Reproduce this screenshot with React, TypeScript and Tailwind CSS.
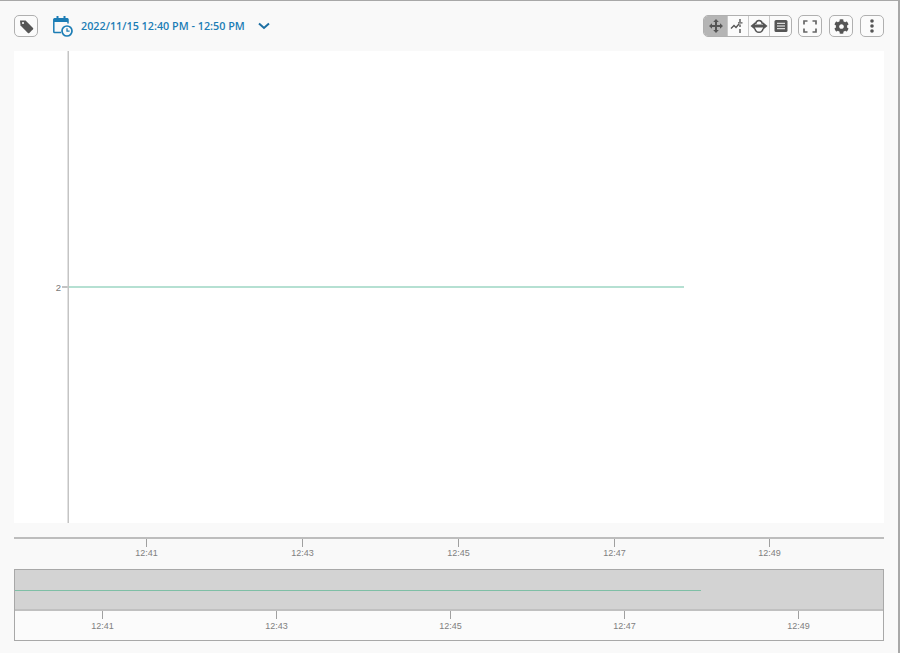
import { FaCog } from 'react-icons/fa'
import type { ReactNode } from 'react'

function IconButton({ children }: { children: ReactNode }) {
  return (
    <button className="flex h-[22px] w-[24px] items-center justify-center rounded-[5px] border border-[#b0b0b0] bg-[#fbfbfb] text-[#555]">
      {children}
    </button>
  )
}

function TagIcon() {
  return (
    <svg width="15" height="15" viewBox="0 0 15 15" fill="#555">
      <path d="M1 1.500h5.600L14 8.900a1 1 0 0 1 0 1.400l-3.700 3.700a1 1 0 0 1-1.400 0L1.500 6.600z" />
      <circle cx="4" cy="4" r="1.100" fill="#fbfbfb" />
    </svg>
  )
}

function CalendarClock() {
  return (
    <svg width="20" height="21" viewBox="0 0 20 21" fill="none">
      <path d="M8 16.500H1.600a.8.8 0 0 1-.8-.8V3.500a.8.8 0 0 1 .8-.8h12.600a.8.8 0 0 1 .8.8v4" stroke="#1c7db5" strokeWidth="1.500" />
      <rect x="1" y="2.500" width="14" height="3.500" fill="#1c7db5" />
      <rect x="3.500" y="0" width="2" height="3.500" fill="#1c7db5" />
      <rect x="10.500" y="0" width="2" height="3.500" fill="#1c7db5" />
      <circle cx="14" cy="15" r="5" fill="#f9f9f9" stroke="#1c7db5" strokeWidth="1.700" />
      <path d="M14 12.200v3h2.600" stroke="#1c7db5" strokeWidth="1.300" />
    </svg>
  )
}

function MoveIcon() {
  return (
    <svg width="14" height="14" viewBox="0 0 14 14" fill="#555">
      <path d="M6 3h2v3h3V4.200L14 7l-3 2.800V8H8v3h1.800L7 14l-2.800-3H6V8H3v1.800L0 7l3-2.800V6h3V3H4.200L7 0l2.800 3z" />
    </svg>
  )
}

function TraceIcon() {
  return (
    <svg width="16" height="16" viewBox="0 0 16 16" fill="none" stroke="#555">
      <path d="M1 10.500l3-3 2 2 3-3.500" strokeWidth="1.400" />
      <path d="M10 1v3M10 6.500v2.500M10 11v4" strokeWidth="1.400" />
      <path d="M8 4.800h4.500" strokeWidth="1.300" />
    </svg>
  )
}

function ExpandIcon() {
  return (
    <svg width="18" height="16" viewBox="0 0 18 16" fill="none">
      <path d="M5.500 6C6 3.500 7.500 2.500 9 2.500s3 1 3.500 3.500" stroke="#555" strokeWidth="1.500" />
      <path d="M5 10.500c.3 2.500 2 3.800 4 3.800s3.700-1.300 4-3.800" stroke="#555" strokeWidth="1.500" />
      <path d="M0.500 8L5 4.200v2.400h8V4.200L17.500 8 13 11.800V9.400H5v2.400z" fill="#555" />
    </svg>
  )
}

function NotesIcon() {
  return (
    <svg width="14" height="14" viewBox="0 0 14 14">
      <rect x="0.500" y="1" width="13" height="12" rx="1.500" fill="#555" />
      <path d="M3 4.300h8M3 7h8M3 9.700h8" stroke="#fbfbfb" strokeWidth="1" />
    </svg>
  )
}

function CornersIcon() {
  return (
    <svg width="14" height="13" viewBox="0 0 14 13" fill="none" stroke="#666" strokeWidth="1.700">
      <path d="M1 4.500V1h3.500M9.500 1H13v3.500M13 8.500V12H9.500M4.500 12H1V8.500" />
    </svg>
  )
}

function Toolbar() {
  return (
    <div className="flex h-[22px] items-center pl-[14px] pr-[14px]">
      <IconButton>
        <TagIcon />
      </IconButton>
      <div className="ml-[15px] flex">
        <CalendarClock />
      </div>
      <span className='ml-[8px] font-["Open_Sans",sans-serif] text-[10.8px] font-semibold text-[#1c7db5]'>
        2022/11/15 12:40 PM - 12:50 PM
      </span>
      <svg className="ml-[13px]" width="12" height="8" viewBox="0 0 12 8" fill="none" stroke="#1c6fa3" strokeWidth="2">
        <path d="M1 1.500l5 4.500 5-4.500" />
      </svg>

      <div className="ml-auto flex items-center gap-[7px]">
        <div className="mr-[-1px] flex h-[22px] overflow-hidden rounded-[5px] border border-[#b0b0b0] bg-[#fbfbfb]">
          <div className="flex w-[24px] items-center justify-center border-r border-[#c9c9c9] bg-[#b5b5b5]">
            <MoveIcon />
          </div>
          <div className="flex w-[21px] items-center justify-center border-r border-[#c9c9c9]">
            <TraceIcon />
          </div>
          <div className="flex w-[21px] items-center justify-center border-r border-[#c9c9c9]">
            <ExpandIcon />
          </div>
          <div className="flex w-[21px] items-center justify-center">
            <NotesIcon />
          </div>
        </div>
        <IconButton>
          <CornersIcon />
        </IconButton>
        <IconButton>
          <FaCog size={15} className="text-[#555]" />
        </IconButton>
        <IconButton>
          <svg width="4" height="14" viewBox="0 0 4 14" fill="#555">
            <circle cx="2" cy="2" r="1.800" />
            <circle cx="2" cy="7" r="1.800" />
            <circle cx="2" cy="12" r="1.800" />
          </svg>
        </IconButton>
      </div>
    </div>
  )
}

function Plot() {
  return (
    <div className="mx-[14px] mt-[14px] h-[472px] w-[870px] bg-white">
      <svg width="870" height="472" className="block">
        <rect x="53.500" y="0" width="1.500" height="472" fill="#c4c4c4" />
        <rect x="48" y="235.500" width="5.500" height="1" fill="#888" />
        <text x="47" y="240" textAnchor="end" fontSize="9.500" fontFamily="Liberation Sans" fill="#777">
          2
        </text>
        <rect x="55" y="235.500" width="615" height="1" fill="#6cc2a6" />
      </svg>
    </div>
  )
}

function Ticks({ xs, height, labelY }: { xs: number[]; height: number; labelY: number }) {
  const labels = ['12:41', '12:43', '12:45', '12:47', '12:49']
  return (
    <svg width="870" height={height} className="block">
      {xs.map((x, i) => (
        <g key={labels[i]}>
          <rect x={x} y="0" width="1" height="8" fill="#a0a0a0" />
          <text x={x + 0.500} y={labelY} textAnchor="middle" fontSize="9" fontFamily="Liberation Sans" fill="#808080">
            {labels[i]}
          </text>
        </g>
      ))}
    </svg>
  )
}

function TimeAxis() {
  return (
    <div className="mx-[14px] mt-[14px] w-[870px] border-t-2 border-[#bdbdbd]">
      <Ticks xs={[132, 288, 444, 600, 755]} height={30} labelY={17} />
    </div>
  )
}

function Navigator() {
  return (
    <div className="mx-[14px] h-[72px] w-[870px] border border-[#a8a8a8] bg-[#fbfbfb]">
      <div className="h-[41px] border-b-2 border-[#c0c0c0] bg-[#d3d3d3] pt-[20px]">
        <div className="h-px w-[686px] bg-[#7fbfa6]" />
      </div>
      <Ticks xs={[87, 261, 435, 609, 783]} height={28} labelY={18} />
    </div>
  )
}

export default function App() {
  return (
    <div className="h-[653px] w-[900px] overflow-hidden border-t border-r-2 border-[#a8a8a8] bg-[#f9f9f9] pt-[14px]">
      <Toolbar />
      <Plot />
      <TimeAxis />
      <Navigator />
    </div>
  )
}
